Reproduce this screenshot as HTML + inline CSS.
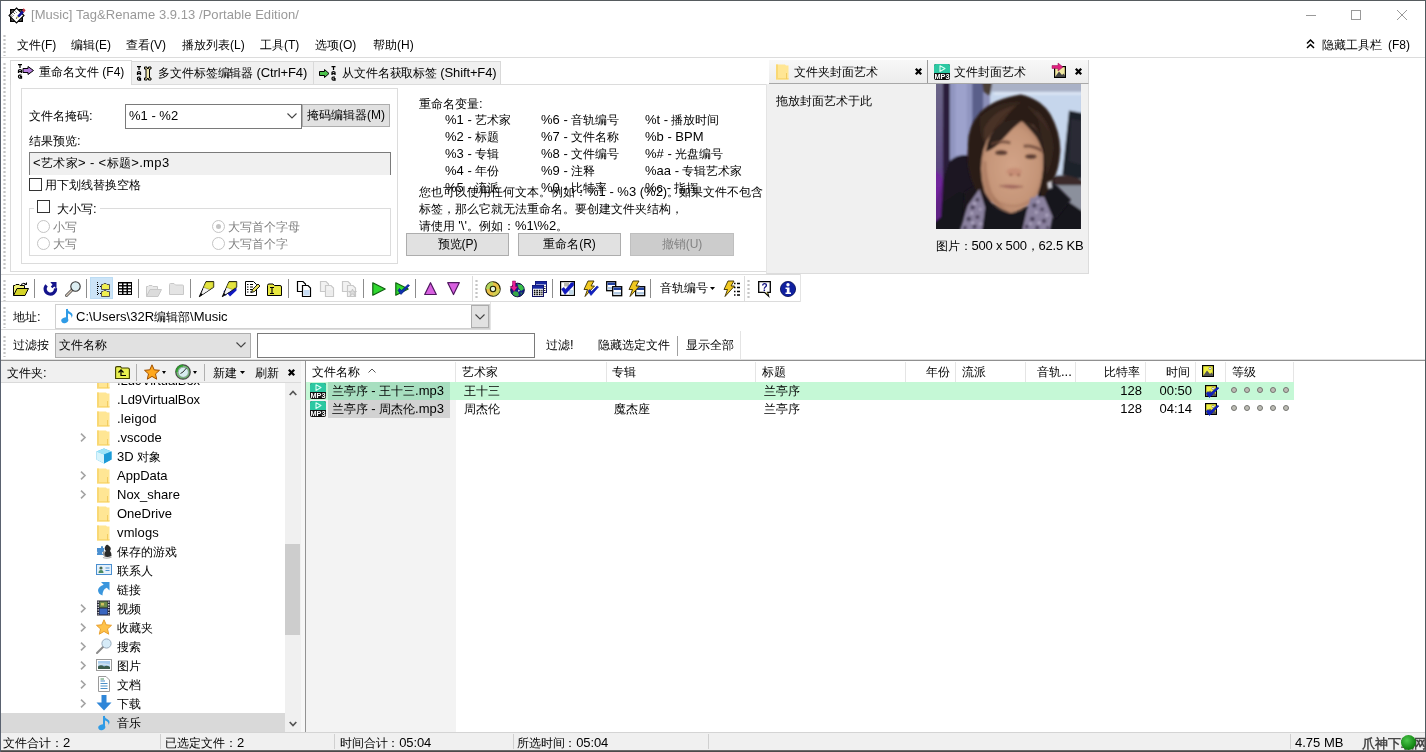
<!DOCTYPE html>
<html><head><meta charset="utf-8">
<style>
*{box-sizing:border-box;margin:0;padding:0}
html,body{width:1426px;height:752px;overflow:hidden;background:#fff}
body{font-family:"Liberation Sans",sans-serif;font-size:12px;color:#000;position:relative}
.a{position:absolute;white-space:nowrap}
.t{position:absolute;white-space:nowrap;line-height:16px;height:16px}
.r{position:absolute;white-space:nowrap;line-height:16px;height:16px;text-align:right}
.g{color:#808080}
.l{font-size:13px}
.sep{position:absolute;width:1px;background:#8c8c8c}
.hl{position:absolute;height:1px;background:#dcdcdc}
.btn{position:absolute;background:#e1e1e1;border:1px solid #adadad;text-align:center;line-height:20px;white-space:nowrap}
.cb{position:absolute;width:13px;height:13px;border:1px solid #333;background:#fff}
.rd{position:absolute;width:13px;height:13px;border:1px solid #c4c4c4;border-radius:50%;background:#fff}
.grip{position:absolute;width:3px;background-image:radial-gradient(circle,#c4c4c4 1px,transparent 1.3px);background-size:3px 4px}
svg{position:absolute;overflow:visible}
#root{position:absolute;left:0;top:0;width:1426px;height:752px;overflow:hidden;will-change:transform;transform:translateZ(0);opacity:.999}
</style></head><body>
<div id="root">
<div class="a" style="left:0px;top:0px;width:1px;height:752px;background:#5a6270"></div>
<div class="a" style="left:0px;top:0px;width:1426px;height:1px;background:#565b5e"></div>
<div class="a" style="left:1425px;top:0px;width:1px;height:752px;background:#4f5a5e"></div>
<svg style="left:8px;top:6px" width="18" height="18" viewBox="0 0 18 18" ><rect x="2.8" y="3.8" width="11.4" height="11.4" fill="#c8c8c8" stroke="#000" stroke-width="1.6"/>
<path d="M8.5 2L16 9.5L8.5 17L1 9.5Z" fill="#fff" stroke="#000" stroke-width="1.1"/>
<path d="M3.5 7.5L6 10M5 6L7.5 8.5M2.5 9L4.5 11M6.500 4.500L8.500 6.500" stroke="#000" stroke-width=".9" stroke-dasharray="1 .8"/>
<path d="M8.5 12L9.800 9.300L14 4.500L16 6.500L11.500 11Z" fill="#10109a"/>
<path d="M7.800 12.800L9.200 9.800L11 11.400Z" fill="#d8d880"/><path d="M7.800 12.800L8.400 11.500L9.200 12.200Z" fill="#000"/>
<path d="M14 4.500L15.600 2.300L17.600 4.300L16 6.500Z" fill="#c03040"/></svg>
<div class="t" style="left:31px;top:7px;font-size:13px;color:#999;letter-spacing:.05px">[Music] Tag&amp;Rename 3.9.13 /Portable Edition/</div>
<svg style="left:1300px;top:5px" width="120" height="20"><g stroke="#999" stroke-width="1" fill="none"><path d="M6 10.5H16"/><rect x="51.5" y="5.500" width="9" height="9"/><path d="M97 5L107 15M107 5L97 15"/></g></svg>
<div class="grip" style="left:3px;top:34px;height:22px"></div>
<div class="t" style="left:17px;top:37px;">文件(F)</div>
<div class="t" style="left:71px;top:37px;">编辑(E)</div>
<div class="t" style="left:126px;top:37px;">查看(V)</div>
<div class="t" style="left:182px;top:37px;">播放列表(L)</div>
<div class="t" style="left:260px;top:37px;">工具(T)</div>
<div class="t" style="left:315px;top:37px;">选项(O)</div>
<div class="t" style="left:373px;top:37px;">帮助(H)</div>
<svg style="left:1306px;top:39px" width="9" height="10"><path d="M1 4.500L4.500 1L8 4.500M1 9L4.500 5.500L8 9" stroke="#000" stroke-width="1.500" fill="none"/></svg>
<div class="t" style="left:1322px;top:37px;">隐藏工具栏</div>
<div class="t" style="left:1388px;top:37px;">(F8)</div>
<div class="hl" style="left:1px;top:57px;width:1424px"></div>
<div class="grip" style="left:3px;top:62px;height:208px"></div>
<div class="a" style="left:10px;top:84px;width:1079px;height:188px;border:1px solid #dcdcdc;background:#fff"></div>
<div class="a" style="left:131px;top:61px;width:183px;height:23px;background:#f0f0f0;border:1px solid #d9d9d9;border-bottom:none"></div>
<div class="a" style="left:313px;top:61px;width:188px;height:23px;background:#f0f0f0;border:1px solid #d9d9d9;border-bottom:none"></div>
<div class="a" style="left:10px;top:60px;width:122px;height:25px;background:#fff;border:1px solid #d9d9d9;border-bottom:none"></div>
<svg style="left:18px;top:64px" width="16" height="15" viewBox="0 0 16 15" ><g stroke="#000" stroke-width="1.250" fill="none">
<path d="M0 0.5H4M2 0V4"/>
<path d="M0.5 9V6.5Q0.5 5.5 2 5.5Q3.5 5.5 3.5 6.5V9M0.5 7.5H3.5"/>
<path d="M3.5 11H1.5Q0.5 11 0.5 12.5Q0.5 14 1.5 14H3.5V12.5H2"/></g><path d="M5 4.5H10V2.500L15.500 6.500L10 10.500V8.500H5Z" fill="#b57edc" stroke="#000" stroke-width="1"/></svg>
<svg style="left:137px;top:66px" width="16" height="15" viewBox="0 0 16 15" ><g stroke="#000" stroke-width="1.250" fill="none">
<path d="M0 0.5H4M2 0V4"/>
<path d="M0.5 9V6.5Q0.5 5.5 2 5.5Q3.5 5.5 3.5 6.5V9M0.5 7.5H3.5"/>
<path d="M3.5 11H1.5Q0.5 11 0.5 12.5Q0.5 14 1.5 14H3.5V12.5H2"/></g><path d="M7.5 1H10V2.5H11.5V1H14V3H12.5V12H14V14H11.5V12.5H10V14H7.5V12H9V3H7.5Z" fill="#f0e8b0" stroke="#000" stroke-width="1"/></svg>
<svg style="left:319px;top:66px" width="16" height="15" viewBox="0 0 16 15" ><path d="M0.5 5.5H5.5V3.5L10 7.5L5.5 11.5V9.5H0.5Z" fill="#4cc24c" stroke="#000" stroke-width="1"/><g stroke="#000" stroke-width="1.250" fill="none">
<path d="M12.5 0.5H16.5M14.5 0V4"/>
<path d="M13.0 9V6.5Q13.0 5.5 14.5 5.5Q16.0 5.5 16.0 6.5V9M13.0 7.5H16.0"/>
<path d="M16.0 11H14.0Q13.0 11 13.0 12.5Q13.0 14 14.0 14H16.0V12.5H14.5"/></g></svg>
<div class="t" style="left:39px;top:64px;">重命名文件 (F4)</div>
<div class="t" style="left:158px;top:65px;letter-spacing:-0.1px;">多文件标签编辑器 <span class="l">(Ctrl+F4)</span></div>
<div class="t" style="left:342px;top:65px;letter-spacing:-0.12px;">从文件名获取标签 <span class="l">(Shift+F4)</span></div>
<div class="a" style="left:21px;top:88px;width:377px;height:176px;border:1px solid #dcdcdc"></div>
<div class="t" style="left:29px;top:108px;">文件名掩码<span class="l">:</span></div>
<div class="a" style="left:125px;top:104px;width:177px;height:25px;border:1px solid #7a7a7a;background:#fff"></div>
<div class="t" style="left:129px;top:108px;"><span class="l">%1 - %2</span></div>
<svg style="left:287px;top:113px" width="10" height="6" viewBox="0 0 10 6" ><path d="M0.5 0.5L5 5L9.5 0.5" stroke="#444" fill="none" stroke-width="1.1"/></svg>
<div class="btn" style="left:302px;top:104px;width:88px;height:23px">掩码编辑器(M)</div>
<div class="t" style="left:29px;top:133px;">结果预览<span class="l">:</span></div>
<div class="a" style="left:29px;top:152px;width:362px;height:23px;background:#f0f0f0;border:1px solid #7a7a7a;border-bottom:none"></div>
<div class="t" style="left:33px;top:155px;letter-spacing:0.35px;"><span class="l">&lt;</span>艺术家<span class="l">&gt; - &lt;</span>标题<span class="l">&gt;.mp3</span></div>
<div class="cb" style="left:29px;top:178px"></div>
<div class="t" style="left:45px;top:177px;">用下划线替换空格</div>
<div class="a" style="left:29px;top:208px;width:362px;height:48px;border:1px solid #dcdcdc"></div>
<div class="a" style="left:34px;top:199px;width:66px;height:16px;background:#fff"></div>
<div class="cb" style="left:37px;top:200px"></div>
<div class="t" style="left:57px;top:201px;">大小写<span class="l">:</span></div>
<div class="rd" style="left:37px;top:220px"></div>
<div class="t g" style="left:53px;top:219px;">小写</div>
<div class="rd" style="left:37px;top:237px"></div>
<div class="t g" style="left:53px;top:236px;">大写</div>
<div class="rd" style="left:212px;top:220px"></div>
<div class="a" style="left:216px;top:224px;width:5px;height:5px;border-radius:50%;background:#c4c4c4"></div>
<div class="t g" style="left:228px;top:219px;">大写首个字母</div>
<div class="rd" style="left:212px;top:237px"></div>
<div class="t g" style="left:228px;top:236px;">大写首个字</div>
<div class="t" style="left:419px;top:96px;">重命名变量<span class="l">:</span></div>
<div class="t" style="left:445px;top:112px;"><span class="l">%1 -</span> 艺术家</div>
<div class="t" style="left:541px;top:112px;"><span class="l">%6 -</span> 音轨编号</div>
<div class="t" style="left:645px;top:112px;"><span class="l">%t -</span> 播放时间</div>
<div class="t" style="left:445px;top:129px;"><span class="l">%2 -</span> 标题</div>
<div class="t" style="left:541px;top:129px;"><span class="l">%7 -</span> 文件名称</div>
<div class="t" style="left:645px;top:129px;"><span class="l">%b - BPM</span></div>
<div class="t" style="left:445px;top:146px;"><span class="l">%3 -</span> 专辑</div>
<div class="t" style="left:541px;top:146px;"><span class="l">%8 -</span> 文件编号</div>
<div class="t" style="left:645px;top:146px;"><span class="l">%# -</span> 光盘编号</div>
<div class="t" style="left:445px;top:163px;"><span class="l">%4 -</span> 年份</div>
<div class="t" style="left:541px;top:163px;"><span class="l">%9 -</span> 注释</div>
<div class="t" style="left:645px;top:163px;"><span class="l">%aa -</span> 专辑艺术家</div>
<div class="t" style="left:445px;top:180px;"><span class="l">%5 -</span> 流派</div>
<div class="t" style="left:541px;top:180px;"><span class="l">%0 -</span> 比特率</div>
<div class="t" style="left:645px;top:180px;"><span class="l">%c -</span> 指挥</div>
<div class="t" style="left:419px;top:184px;">您也可以使用任何文本。例如：<span class="l">%1 - %3 (%2)</span>。如果文件不包含</div>
<div class="t" style="left:419px;top:201px;">标签，那么它就无法重命名。要创建文件夹结构，</div>
<div class="t" style="left:419px;top:218px;">请使用 <span class="l">'\'</span>。例如：<span class="l">%1\%2</span>。</div>
<div class="btn" style="left:406px;top:233px;width:103px;height:23px">预览(P)</div>
<div class="btn" style="left:518px;top:233px;width:103px;height:23px">重命名(R)</div>
<div class="btn" style="left:630px;top:233px;width:104px;height:23px;background:#ccc;border-color:#bfbfbf;color:#838383">撤销(U)</div>
<div class="a" style="left:766px;top:84px;width:323px;height:190px;background:#f0f0f0;border:1px solid #dcdcdc;border-top:none;border-left:1px solid #e4e4e4"></div>
<div class="a" style="left:766px;top:58px;width:4px;height:26px;background:#fff"></div>
<div class="a" style="left:769px;top:60px;width:320px;height:24px;background:linear-gradient(#f8f8f8,#ececec);border-bottom:1px solid #a8a8a8;border-right:1px solid #d0d0d0"></div>
<div class="a" style="left:927px;top:60px;width:1px;height:23px;background:#9a9a9a"></div>
<svg style="left:776px;top:64px" width="13" height="16" viewBox="0 0 13 16" ><path d="M0 0.5H9L10 1.5H12.5V15.5H0Z" fill="#ffe694"/><path d="M0 0.5H2V15.5H0ZM0 14H12.5V15.5H0Z" fill="#f9d874"/><path d="M10.5 9V15" stroke="#f2cc60" stroke-width="1"/></svg>
<div class="t" style="left:794px;top:64px;">文件夹封面艺术</div>
<svg style="left:915px;top:68px" width="7" height="7" viewBox="0 0 7 7" ><path d="M0.8 0.8L6.2 6.2M6.2 0.8L0.8 6.2" stroke="#000" stroke-width="2.3"/></svg>
<svg style="left:934px;top:64px" width="16" height="16" viewBox="0 0 16 16" ><rect x="0" y="0" width="16" height="16" rx="2" fill="#111"/><path d="M0 9V2Q0 0 2 0H14Q16 0 16 2V9Z" fill="#2cc8a2"/><path d="M6 1.8V7.4L11 4.6Z" fill="none" stroke="#d8fff4" stroke-width="1.1" stroke-linejoin="round"/><text x="8" y="15.300" font-family="Liberation Sans" font-weight="bold" font-size="7.6" text-anchor="middle" fill="#fff" textLength="15" lengthAdjust="spacingAndGlyphs">MP3</text></svg>
<div class="t" style="left:954px;top:64px;">文件封面艺术</div>
<svg style="left:1052px;top:63px" width="14" height="15" viewBox="0 0 14 15" ><rect x="2.6" y="3.6" width="10.8" height="10.8" fill="#f0e8a0" stroke="#000" stroke-width="1.2"/><path d="M3 14L7 8.5L10 12L11.5 10.5L13 12.5V14Z" fill="#444"/><path d="M0 2.5H6V0L11 4L6 8V5.5H0Z" fill="#e02080" stroke="#901050" stroke-width=".5"/></svg>
<svg style="left:1075px;top:68px" width="7" height="7" viewBox="0 0 7 7" ><path d="M0.8 0.8L6.2 6.2M6.2 0.8L0.8 6.2" stroke="#000" stroke-width="2.3"/></svg>
<div class="t" style="left:776px;top:93px;">拖放封面艺术于此</div>
<div class="t" style="left:936px;top:238px;letter-spacing:-0.2px;">图片：<span class="l">500 x 500</span>，<span class="l">62.5 KB</span></div>
<svg style="left:936px;top:84px" width="145" height="145" viewBox="0 0 752 752" preserveAspectRatio="none">
<defs><filter id="b1" x="-5%" y="-5%" width="110%" height="110%"><feGaussianBlur stdDeviation="5"/></filter>
<filter id="b2" x="-10%" y="-10%" width="120%" height="120%"><feGaussianBlur stdDeviation="9"/></filter>
<clipPath id="pc"><rect x="0" y="0" width="752" height="752"/></clipPath>
<linearGradient id="lg1" x1="0" y1="0" x2="0" y2="1"><stop offset="0" stop-color="#6c6788"/><stop offset=".55" stop-color="#5c4a80"/><stop offset=".75" stop-color="#6a1c92"/><stop offset="1" stop-color="#4a0c6a"/></linearGradient>
<radialGradient id="fg" cx=".5" cy=".5" r=".6"><stop offset="0" stop-color="#d3a488"/><stop offset=".7" stop-color="#c59578"/><stop offset="1" stop-color="#a67860"/></radialGradient>
</defs>
<g clip-path="url(#pc)">
<rect width="752" height="752" fill="#8c8fb8"/>
<g filter="url(#b1)">
<rect x="280" y="-10" width="480" height="520" fill="#c6d6ec"/>
<rect x="280" y="-10" width="480" height="50" fill="#a9b1c6"/>
<rect x="300" y="42" width="460" height="14" fill="#dbe6f4"/>
<rect x="-10" y="-10" width="50" height="780" fill="url(#lg1)"/>
<rect x="36" y="-10" width="36" height="780" fill="#2a1f3a"/>
<rect x="72" y="-10" width="120" height="420" fill="#9095c0"/>
<rect x="100" y="-10" width="60" height="380" fill="#9da2cc"/>
<rect x="188" y="-10" width="56" height="300" fill="#5a5e8a"/>
<path d="M240 -10H292L280 62L246 40Z" fill="#4a3c34"/>
<path d="M690 138L760 150V505L655 470Z" fill="#1f2029"/>
<path d="M700 180L752 190V420L690 400Z" fill="#2a2b34"/>
<path d="M590 490H760V680L620 600Z" fill="#8b909c"/>
<path d="M600 480Q680 460 760 500V525H600Z" fill="#3a2c2c"/>
<path d="M70 400Q130 350 200 380L260 560L200 770H-10V640Z" fill="#1b1521"/>
<path d="M0 640L120 560L300 620L520 640L570 530L760 660V770H-10Z" fill="#17131c"/>
<path d="M-10 450Q25 450 36 520L26 690L-10 720Z" fill="#7424a0" opacity=".8"/>
</g>
<g filter="url(#b1)">
<path d="M150 560L250 500L300 660L140 700Z" fill="#1a141f"/><path d="M520 520L600 500L700 600L620 700L540 640Z" fill="#19141d"/>
<!-- hair -->
<path d="M166 330Q160 225 228 148Q300 76 440 55Q545 78 595 160Q645 250 645 345Q640 445 605 505Q585 550 550 600L520 470L250 480L245 610Q150 480 166 330Z" fill="#2b1e19"/>
<path d="M230 170Q330 80 450 95Q400 110 340 170Q280 240 260 330Q220 260 230 170Z" fill="#36261f"/>
<path d="M520 130Q600 200 610 330Q600 420 575 470Q560 330 520 130Z" fill="#35251f"/>
<path d="M250 230Q300 130 420 110Q360 160 330 230Q300 300 285 350Q240 300 250 230Z" fill="#5a3c2e" opacity=".55"/>
<path d="M470 110Q560 150 590 260Q560 200 520 170Q495 140 470 110Z" fill="#4c3327" opacity=".5"/>
<!-- face -->
<path d="M246 340Q270 250 350 205Q430 175 505 215Q552 260 556 380Q560 480 528 570Q470 655 390 670Q300 650 252 560Q218 450 246 340Z" fill="url(#fg)"/>
<path d="M246 400Q236 500 270 580Q320 650 390 670Q330 630 290 560Q262 480 262 400Z" fill="#a9795f" opacity=".7"/>
<path d="M330 210Q380 175 445 190Q395 230 350 282Q300 340 258 352Q270 255 330 210Z" fill="#2f201a"/>
<path d="M445 190Q520 200 556 300L556 370Q540 290 500 250Q470 215 445 190Z" fill="#2f201a"/>
<!-- shirt & scarf -->
<path d="M245 600Q330 672 400 672Q470 660 520 600L560 770H220Z" fill="#17121b"/>
<path d="M225 545L255 640L238 770H120L165 630Z" fill="#8a819e"/>
<path d="M490 590L560 585L605 690L590 770H445L470 660Z" fill="#8a819e"/>
</g>
<g filter="url(#b1)" opacity=".9">
<ellipse cx="338" cy="356" rx="32" ry="11" fill="#4a2e26"/>
<ellipse cx="492" cy="376" rx="30" ry="11" fill="#4a2e26"/>
<path d="M285 312Q330 290 385 305" stroke="#6a4638" stroke-width="13" fill="none"/>
<path d="M455 322Q500 315 550 345" stroke="#6a4638" stroke-width="13" fill="none"/>
<ellipse cx="405" cy="455" rx="40" ry="20" fill="#c68c74"/>
<ellipse cx="388" cy="470" rx="9" ry="5" fill="#8a5646"/><ellipse cx="428" cy="472" rx="9" ry="5" fill="#8a5646"/>
<path d="M335 528Q390 515 445 532Q390 552 335 528Z" fill="#a86c62"/>
<path d="M330 528Q390 538 450 532" stroke="#84504a" stroke-width="5" fill="none"/>
<path d="M300 600Q390 660 480 610" stroke="#a87860" stroke-width="10" fill="none" opacity=".6"/>
<path d="M575 510L600 500L605 540L580 545Z" fill="#d8d8e0"/>
</g>
<g fill="#2c2438" opacity=".7" filter="url(#b1)">
<circle cx="190" cy="640" r="10"/><circle cx="215" cy="600" r="9"/><circle cx="170" cy="700" r="11"/><circle cx="215" cy="690" r="9"/><circle cx="200" cy="740" r="10"/><circle cx="150" cy="745" r="9"/>
<circle cx="510" cy="630" r="10"/><circle cx="550" cy="650" r="9"/><circle cx="500" cy="700" r="11"/><circle cx="560" cy="710" r="10"/><circle cx="525" cy="745" r="10"/><circle cx="470" cy="740" r="9"/><circle cx="580" cy="745" r="8"/>
</g>
<g fill="#c8c0d8" opacity=".7" filter="url(#b1)"><circle cx="200" cy="620" r="8"/><circle cx="185" cy="670" r="8"/><circle cx="230" cy="650" r="7"/><circle cx="190" cy="720" r="8"/><circle cx="230" cy="725" r="7"/><circle cx="530" cy="610" r="8"/><circle cx="520" cy="665" r="8"/><circle cx="575" cy="680" r="8"/><circle cx="535" cy="720" r="8"/><circle cx="490" cy="725" r="7"/></g>
</g>
</svg>

<div class="a" style="left:1px;top:274px;width:800px;height:1px;background:#dcdcdc"></div>
<div class="a" style="left:1px;top:301px;width:800px;height:1px;background:#dcdcdc"></div>
<div class="a" style="left:800px;top:274px;width:1px;height:28px;background:#e4e4e4"></div>
<div class="grip" style="left:3px;top:279px;height:22px"></div>
<div class="a" style="left:90px;top:277px;width:23px;height:22px;background:#cce4f7;border:1px solid #bcdcf4"></div>
<div class="sep" style="left:34px;top:279px;height:19px"></div>
<div class="sep" style="left:86px;top:279px;height:19px"></div>
<div class="sep" style="left:138px;top:279px;height:19px"></div>
<div class="sep" style="left:190px;top:279px;height:19px"></div>
<div class="sep" style="left:288px;top:279px;height:19px"></div>
<div class="sep" style="left:363px;top:279px;height:19px"></div>
<div class="sep" style="left:415px;top:279px;height:19px"></div>
<div class="sep" style="left:552px;top:279px;height:19px"></div>
<div class="sep" style="left:650px;top:279px;height:19px"></div>
<div class="a" style="left:472px;top:276px;width:1px;height:25px;background:#dcdcdc"></div>
<div class="grip" style="left:475px;top:279px;height:20px"></div>
<div class="a" style="left:744px;top:276px;width:1px;height:25px;background:#dcdcdc"></div>
<div class="grip" style="left:747px;top:279px;height:20px"></div>
<svg style="left:13px;top:282px" width="16" height="14" viewBox="0 0 16 14" ><path d="M0.5 13.5V3.5H2L3 2.5H6L7 3.5H11.5V6.5" fill="#f2f27a" stroke="#000"/>
<path d="M0.5 13.5L4 6.5H15.5L12 13.5Z" fill="#d4d428" stroke="#000"/><path d="M8 2.5Q11 0 13.5 2.5M13.5 2.5V0.5M13.5 2.5H11.5" stroke="#000" fill="none" stroke-width="1"/></svg>
<svg style="left:43px;top:282px" width="15" height="15" viewBox="0 0 15 15" ><path d="M3.600 3.300A5.200 5.200 0 1 0 12.500 6.300" fill="none" stroke="#14148c" stroke-width="3.200"/><path d="M7.300 0H13.500V6.800L11.300 4.600L9.300 6.300L7.800 4.600L9.500 2.800Z" fill="#14148c"/></svg>
<svg style="left:65px;top:281px" width="16" height="16" viewBox="0 0 16 16" ><path d="M1.5 14.5L8 8" stroke="#555" stroke-width="3" stroke-linecap="round"/><path d="M1.5 14.5L8 8" stroke="#d8c8b8" stroke-width="1.2" stroke-linecap="round"/><circle cx="10.5" cy="5.5" r="4.7" fill="#dceef2" stroke="#333" stroke-width="1.1"/></svg>
<svg style="left:96px;top:282px" width="14" height="15" viewBox="0 0 14 15" ><path d="M1.5 0V14M2 4.5H5M2 11.5H5" stroke="#000" stroke-dasharray="1 1" fill="none"/>
<path d="M5.5 7.5V2.5H7L8 1.5H10L11 2.5H13.5V7.5Z" fill="#f0f050" stroke="#555"/>
<path d="M5.5 14.5V9.5H7L8 8.5H10L11 9.5H13.5V14.5Z" fill="#f0f050" stroke="#555"/></svg>
<svg style="left:118px;top:282px" width="14" height="13" viewBox="0 0 14 13" ><rect x="0" y="0" width="14" height="13" fill="#000"/><g fill="#fff"><rect x="1" y="1.5" width="3" height="1.6"/><rect x="5.5" y="1.5" width="3" height="1.6"/><rect x="10" y="1.5" width="3" height="1.6"/><rect x="1" y="4.5" width="3" height="1.6"/><rect x="5.5" y="4.5" width="3" height="1.6"/><rect x="10" y="4.5" width="3" height="1.6"/><rect x="1" y="7.5" width="3" height="1.6"/><rect x="5.5" y="7.5" width="3" height="1.6"/><rect x="10" y="7.5" width="3" height="1.6"/><rect x="1" y="10.3" width="3" height="1.6"/><rect x="5.5" y="10.3" width="3" height="1.6"/><rect x="10" y="10.3" width="3" height="1.6"/></g></svg>
<svg style="left:146px;top:283px" width="16" height="14" viewBox="0 0 16 14" ><path d="M0.5 13.5V3.5H2L3 2.5H6L7 3.5H11.5V6.5" fill="#e8e8e8" stroke="#c8c8c8"/>
<path d="M0.5 13.5L4 6.5H15.5L12 13.5Z" fill="#dcdcdc" stroke="#c8c8c8"/></svg>
<svg style="left:169px;top:282px" width="16" height="14" viewBox="0 0 16 14" ><path d="M0.5 12.5V2.5Q0.5 1.5 1.5 1.5H5L6.5 3H13.5Q14.5 3 14.5 4V12.5Z" fill="#e4e4e4" stroke="#c8c8c8"/></svg>
<svg style="left:199px;top:281px" width="16" height="16" viewBox="0 0 16 16" ><path d="M7 0.600H14.700V6.200L0.300 15.700Z" fill="#d8d8d8" stroke="#000" stroke-width="1" stroke-linejoin="round"/>
<path d="M7.200 1.100H14.200V6L10.500 8.400L4.700 6.300Z" fill="#e4e440"/>
<path d="M7.200 1.100H14.200V6L10.500 8.400L4.700 6.300Z" fill="none" stroke="#8a8a10" stroke-width=".5"/>
<path d="M4.500 7L10 9L3 13.500Z" fill="#f4f4f4"/><path d="M0.300 15.700L2 12L3.500 13.500Z" fill="#000"/></svg>
<svg style="left:222px;top:281px" width="16" height="16" viewBox="0 0 16 16" ><path d="M1.500 10.500L4 8L14.500 7V9.500L8 15.500L5.500 12.500L3.500 15Z" fill="#1018c0"/><path d="M7 0.600H14.700V6.200L0.300 15.700Z" fill="#d8d8d8" stroke="#000" stroke-width="1" stroke-linejoin="round"/>
<path d="M7.200 1.100H14.200V6L10.500 8.400L4.700 6.300Z" fill="#e4e440"/>
<path d="M7.200 1.100H14.200V6L10.500 8.400L4.700 6.300Z" fill="none" stroke="#8a8a10" stroke-width=".5"/>
<path d="M4.500 7L10 9L3 13.500Z" fill="#f4f4f4"/><path d="M0.300 15.700L2 12L3.500 13.500Z" fill="#000"/></svg>
<svg style="left:245px;top:281px" width="16" height="15" viewBox="0 0 16 15" ><path d="M0.5 0.5H8.5L11.5 3.5V14.5H0.5Z" fill="#fff" stroke="#000"/>
<path d="M2 3.5H3.5M5 3.5H8M2 6H3.5M5 6H8M2 8.5H3.5M5 8.5H8M2 11H3.5M5 11H7" stroke="#000"/>
<path d="M6.5 11.5L7.5 8.5L13 3L15 5L9.5 10.5Z" fill="#e8e060" stroke="#000" stroke-width=".9"/></svg>
<svg style="left:267px;top:283px" width="16" height="14" viewBox="0 0 16 14" ><path d="M0.5 12.5V2.5Q0.5 1 2 1H6L7.5 2.5H13Q14.5 2.5 14.5 4V12.5Z" fill="#e8e840" stroke="#000"/>
<path d="M3 4.5H7M5 4.5V10.5M3 10.5H7" stroke="#000" stroke-width="1.1"/></svg>
<svg style="left:297px;top:281px" width="15" height="16" viewBox="0 0 15 16" ><path d="M0.5 0.5H6L8.5 3V10.5H0.5Z" fill="#fff" stroke="#000" stroke-width="1.2"/>
<path d="M5.5 4.5H11L13.5 7V15.5H5.5Z" fill="#fff" stroke="#000" stroke-width="1.2"/><rect x="6.5" y="9" width="6" height="5.5" fill="#c8ddf5"/></svg>
<svg style="left:320px;top:281px" width="15" height="16" viewBox="0 0 15 16" ><path d="M0.5 0.5H6L8.5 3V10.5H0.5Z" fill="#f2f2f2" stroke="#c8c8c8" stroke-width="1.2"/>
<path d="M5.5 4.5H11L13.5 7V15.5H5.5Z" fill="#f2f2f2" stroke="#c8c8c8" stroke-width="1.2"/><rect x="6.5" y="9" width="6" height="5.5" fill="#ececec"/></svg>
<svg style="left:342px;top:281px" width="15" height="16" viewBox="0 0 15 16" ><path d="M0.5 0.5H6L8.5 3V10.5H0.5Z" fill="#f2f2f2" stroke="#c8c8c8" stroke-width="1.2"/>
<path d="M5.5 4.5H11L13.5 7V15.5H5.5Z" fill="#f2f2f2" stroke="#c8c8c8" stroke-width="1.2"/><rect x="6.5" y="9" width="6" height="5.5" fill="#ececec"/><path d="M10.5 8L11.5 10.5H14.5L12 12L13 15L10.5 13L8 15L9 12L6.5 10.5H9.5Z" fill="#dcdcdc" stroke="#c0c0c0" stroke-width=".8"/></svg>
<svg style="left:372px;top:282px" width="15" height="14" viewBox="0 0 15 14" ><path d="M0.8 0.8V13.2L13.2 7Z" fill="#30d830" stroke="#106010" stroke-width="1.2" stroke-linejoin="round"/></svg>
<svg style="left:395px;top:282px" width="15" height="14" viewBox="0 0 15 14" ><path d="M0.8 0.8V13.2L13.2 7Z" fill="#30d830" stroke="#106010" stroke-width="1.2" stroke-linejoin="round"/><path d="M3 8.5L6 12.5L14.5 3.5L13 2.5L6.5 8.5L4.5 6.5Z" fill="#1030b0" stroke="#001080" stroke-width=".6"/></svg>
<svg style="left:424px;top:282px" width="13" height="13" viewBox="0 0 13 13" ><path d="M0.7 12.5H12.3L6.5 0.7Z" fill="#d860e0" stroke="#501860" stroke-width="1.2" stroke-linejoin="round"/></svg>
<svg style="left:447px;top:282px" width="13" height="13" viewBox="0 0 13 13" ><path d="M0.7 0.7H12.3L6.5 12.5Z" fill="#d860e0" stroke="#501860" stroke-width="1.2" stroke-linejoin="round"/></svg>
<svg style="left:485px;top:281px" width="16" height="16" viewBox="0 0 16 16" ><circle cx="8" cy="8" r="7.200" fill="#e8c048" stroke="#1c1c00" stroke-width="1.100"/><path d="M8 .8A7.200 7.200 0 0 0 .8 8H8Z" fill="#a8d860" opacity=".8"/><path d="M8 15.200A7.200 7.200 0 0 0 15.200 8H8Z" fill="#c8d858" opacity=".6"/><circle cx="8" cy="8" r="2.700" fill="#e8f8e0" stroke="#202000" stroke-width="1.100"/></svg>
<svg style="left:509px;top:281px" width="16" height="16" viewBox="0 0 16 16" ><circle cx="8.500" cy="9" r="6.800" fill="#141c88" stroke="#060c38" stroke-width="1"/>
<path d="M8.500 3L13 4L15 8L12 10L9.500 7Z" fill="#38c048"/><path d="M5 10L9 11L10 14.500L7 15.500L3.500 13Z" fill="#38a848"/><path d="M11 11.500L13.500 11.500L12.500 14Z" fill="#308050"/><path d="M9 8.500L11 9.500L9.500 11Z" fill="#f0f0e0"/>
<path d="M3.500 0H6.500V5.500H8.800L5 10.500L1.200 5.500H3.500Z" fill="#e82098" stroke="#800048" stroke-width=".5"/></svg>
<svg style="left:532px;top:281px" width="16" height="16" viewBox="0 0 16 16" ><rect x="3.500" y="0.500" width="11" height="11" fill="#fff" stroke="#101060"/><rect x="3.500" y="0.500" width="11" height="3" fill="#1828a0"/><path d="M5 5.500H13.500M12 7.500H13.500M12 9.500H13.500" stroke="#222" stroke-dasharray="1.500 1"/>
<rect x="0.500" y="4.500" width="11" height="11" fill="#fff" stroke="#101060"/><rect x="0.500" y="4.500" width="11" height="3.200" fill="#1828a0"/>
<path d="M1.800 9.500H10.500M1.800 11.500H10.500M1.800 13.500H10.500" stroke="#000" stroke-width="1.300" stroke-dasharray="1.600 .900"/></svg>
<svg style="left:560px;top:281px" width="15" height="15" viewBox="0 0 15 15" ><rect x="0.600" y="0.600" width="13.800" height="13.800" fill="#fff" stroke="#000" stroke-width="1.200"/><rect x="4" y="1.500" width="5" height="4" fill="#b8b8b0"/><rect x="9" y="9" width="4.500" height="4.500" fill="#c0d8e8"/>
<path d="M1.500 8L5 13.500L13.500 4.500V1.500L11 2L5.500 8.500L4 6.500Z" fill="#1018c0" stroke="#0810a0" stroke-width=".6"/></svg>
<svg style="left:583px;top:281px" width="16" height="16" viewBox="0 0 16 16" ><path transform="translate(0,0)" d="M5 0H11L8 5H11.500L2 15.500L4.500 8.500H1Z" fill="#f0c820" stroke="#3a2c00" stroke-width=".9"/><path d="M5 10L8 14.5L15.5 6L14 5L8.5 10.5L7 8.5Z" fill="#1020c0" stroke="#0818a0" stroke-width=".6"/></svg>
<svg style="left:606px;top:281px" width="16" height="16" viewBox="0 0 16 16" ><rect x="0.7" y="0.7" width="9" height="9" fill="#fff" stroke="#000" stroke-width="1.3"/><rect x="1.5" y="1.5" width="7.5" height="2.5" fill="#2040a0"/><rect x="1.5" y="6" width="7.5" height="2.5" fill="#b0c8e0"/><rect x="6.7" y="5.7" width="9" height="9" fill="#fff" stroke="#000" stroke-width="1.3"/><rect x="7.5" y="6.5" width="7.5" height="2.5" fill="#2040a0"/><rect x="7.5" y="11" width="7.5" height="2.5" fill="#b0c8e0"/></svg>
<svg style="left:629px;top:281px" width="16" height="16" viewBox="0 0 16 16" ><rect x="6.7" y="5.7" width="9" height="9" fill="#fff" stroke="#000" stroke-width="1.3"/><rect x="7.5" y="6.5" width="7.5" height="2.5" fill="#2040a0"/><rect x="7.5" y="11" width="7.5" height="2.5" fill="#b0c8e0"/><path transform="translate(-1,0)" d="M5 0H11L8 5H11.500L2 15.500L4.500 8.500H1Z" fill="#f0c820" stroke="#3a2c00" stroke-width=".9"/></svg>
<div class="t" style="left:660px;top:280px;">音轨编号</div>
<svg style="left:710px;top:287px" width="5" height="3" viewBox="0 0 5 3" ><path d="M0 0H5L2.5 3Z" fill="#000"/></svg>
<svg style="left:724px;top:281px" width="16" height="16" viewBox="0 0 16 16" ><path transform="translate(-1,0)" d="M5 0H11L8 5H11.500L2 15.500L4.500 8.500H1Z" fill="#f0c820" stroke="#3a2c00" stroke-width=".9"/><path d="M10 2.5H11.5M13 2.5H16M10 6.5H11.5M13 6.5H16M10 10.5H11.5M13 10.5H16M10 14H11.5M13 14H16" stroke="#000" stroke-width="1.4"/></svg>
<svg style="left:758px;top:281px" width="13" height="16" viewBox="0 0 13 16" ><path d="M0.7 0.7H12.3V11.3H9.5L10.5 15L6.5 11.3H0.7Z" fill="#fff" stroke="#000" stroke-width="1.3"/><path d="M8 11.5L10 14L9.3 11.5Z" fill="#e8e060"/><text x="6.5" y="9.6" font-family="Liberation Sans" font-weight="bold" font-size="10" text-anchor="middle" fill="#101080">?</text></svg>
<svg style="left:780px;top:281px" width="16" height="16" viewBox="0 0 16 16" ><circle cx="8" cy="8" r="7.6" fill="#1020a0" stroke="#000850" stroke-width=".8"/><circle cx="8" cy="3.8" r="1.7" fill="#fff"/><path d="M5.5 6.5H9.5V11.5H11V13H5.5V11.5H6.8V8H5.5Z" fill="#fff"/></svg>
<div class="a" style="left:1px;top:329px;width:490px;height:1px;background:#dcdcdc"></div>
<div class="a" style="left:490px;top:302px;width:1px;height:28px;background:#e4e4e4"></div>
<div class="grip" style="left:3px;top:306px;height:22px"></div>
<div class="t" style="left:13px;top:309px;">地址<span class="l">:</span></div>
<div class="a" style="left:55px;top:304px;width:435px;height:25px;border:1px solid #d0d0d0;background:#fff"></div>
<svg style="left:61px;top:308px" width="13" height="16" viewBox="0 0 13 16" ><path d="M6 1V11.5" stroke="#2f9be6" stroke-width="2"/><path d="M6 0.5Q7 3.5 10.5 5Q12.5 7 10.5 10Q11 6.5 6.5 5.2Z" fill="#2f9be6"/><ellipse cx="3.8" cy="12.3" rx="3.6" ry="2.8" fill="#2f9be6" transform="rotate(-20 3.8 12.3)"/></svg>
<div class="t" style="left:76px;top:309px;"><span class="l">C:\Users\32R</span>编辑部<span class="l">\Music</span></div>
<div class="a" style="left:471px;top:305px;width:18px;height:23px;background:#e1e1e1;border:1px solid #adadad"></div>
<svg style="left:475px;top:314px" width="10" height="6" viewBox="0 0 10 6" ><path d="M0.5 0.5L5 5L9.5 0.5" stroke="#444" fill="none" stroke-width="1.1"/></svg>
<div class="grip" style="left:3px;top:335px;height:22px"></div>
<div class="t" style="left:13px;top:337px;">过滤按</div>
<div class="a" style="left:55px;top:333px;width:196px;height:25px;border:1px solid #adadad;background:#e1e1e1"></div>
<div class="t" style="left:59px;top:337px;">文件名称</div>
<svg style="left:236px;top:342px" width="10" height="6" viewBox="0 0 10 6" ><path d="M0.5 0.5L5 5L9.5 0.5" stroke="#444" fill="none" stroke-width="1.1"/></svg>
<div class="a" style="left:257px;top:333px;width:278px;height:25px;border:1px solid #7a7a7a;background:#fff"></div>
<div class="t" style="left:546px;top:337px;">过滤<span class="l">!</span></div>
<div class="t" style="left:598px;top:337px;">隐藏选定文件</div>
<div class="sep" style="left:677px;top:336px;height:20px;background:#a0a0a0"></div>
<div class="t" style="left:686px;top:337px;">显示全部</div>
<div class="a" style="left:740px;top:331px;width:1px;height:28px;background:#e4e4e4"></div>
<div class="a" style="left:1px;top:359px;width:1424px;height:1px;background:#e0e0e0"></div>
<div class="a" style="left:1px;top:360px;width:1424px;height:1px;background:#909090"></div>
<div class="a" style="left:1px;top:361px;width:300px;height:22px;background:#f0f0f0;border-bottom:1px solid #dadada"></div>
<div class="t" style="left:7px;top:365px;">文件夹<span class="l">:</span></div>
<svg style="left:115px;top:366px" width="15" height="13" viewBox="0 0 15 13" ><path d="M0.6 12.5V2Q0.6 0.6 2 0.6H5.5L6.5 2H13Q14.4 2 14.4 3.4V12.5Z" fill="#e8f050" stroke="#404000" stroke-width="1.1"/><path d="M3.5 6.5L6 3.8L8.5 6.5M6 4.2V9.5H11" stroke="#000" stroke-width="1.2" fill="none"/></svg>
<div class="sep" style="left:136px;top:364px;height:17px;background:#b0b0b0"></div>
<svg style="left:144px;top:364px" width="16" height="16" viewBox="0 0 16 16" ><path d="M8 0.8L10.2 5.8L15.5 6.3L11.5 9.9L12.7 15.2L8 12.4L3.3 15.2L4.5 9.9L0.5 6.3L5.8 5.8Z" fill="#ffa81e" stroke="#a05000" stroke-width="1" stroke-linejoin="round"/></svg>
<svg style="left:162px;top:371px" width="4" height="3" viewBox="0 0 4 3" ><path d="M0 0H4L2.0 3Z" fill="#000"/></svg>
<svg style="left:175px;top:364px" width="16" height="16" viewBox="0 0 16 16" ><circle cx="8" cy="8" r="7.2" fill="#6fbf6f" stroke="#4a4a4a" stroke-width="1.3"/><circle cx="8.3" cy="8.3" r="5" fill="#d8eef0" stroke="#889" stroke-width=".6"/><path d="M8 8L11.5 4M8 8L5.5 9.5" stroke="#333" stroke-width="1"/><path d="M1.5 8A6.5 6.5 0 0 1 8 1.5" stroke="#2e9a2e" stroke-width="2" fill="none"/></svg>
<svg style="left:193px;top:371px" width="4" height="3" viewBox="0 0 4 3" ><path d="M0 0H4L2.0 3Z" fill="#000"/></svg>
<div class="sep" style="left:204px;top:364px;height:17px;background:#b0b0b0"></div>
<div class="t" style="left:213px;top:365px;">新建</div>
<svg style="left:240px;top:371px" width="5" height="3" viewBox="0 0 5 3" ><path d="M0 0H5L2.5 3Z" fill="#000"/></svg>
<div class="t" style="left:255px;top:365px;">刷新</div>
<svg style="left:288px;top:369px" width="7" height="7" viewBox="0 0 7 7" ><path d="M0.8 0.8L6.2 6.2M6.2 0.8L0.8 6.2" stroke="#000" stroke-width="2.3"/></svg>
<div class="a" style="left:1px;top:383px;width:284px;height:349px;background:#fff;overflow:hidden">
<svg style="left:96px;top:-10px" width="13" height="16" viewBox="0 0 13 16" ><path d="M0 0.5H9L10 1.5H12.5V15.5H0Z" fill="#ffe694"/><path d="M0 0.5H2V15.5H0ZM0 14H12.5V15.5H0Z" fill="#f9d874"/><path d="M10.5 9V15" stroke="#f2cc60" stroke-width="1"/></svg>
<div class="t" style="left:116px;top:-10px;letter-spacing:-0.1px;"><span class="l">.Ld9VirtualBox</span></div>
<svg style="left:96px;top:9px" width="13" height="16" viewBox="0 0 13 16" ><path d="M0 0.5H9L10 1.5H12.5V15.5H0Z" fill="#ffe694"/><path d="M0 0.5H2V15.5H0ZM0 14H12.5V15.5H0Z" fill="#f9d874"/><path d="M10.5 9V15" stroke="#f2cc60" stroke-width="1"/></svg>
<div class="t" style="left:116px;top:9px;letter-spacing:-0.1px;"><span class="l">.Ld9VirtualBox</span></div>
<svg style="left:96px;top:28px" width="13" height="16" viewBox="0 0 13 16" ><path d="M0 0.5H9L10 1.5H12.5V15.5H0Z" fill="#ffe694"/><path d="M0 0.5H2V15.5H0ZM0 14H12.5V15.5H0Z" fill="#f9d874"/><path d="M10.5 9V15" stroke="#f2cc60" stroke-width="1"/></svg>
<div class="t" style="left:116px;top:28px;letter-spacing:0.2px;"><span class="l">.leigod</span></div>
<svg style="left:79px;top:50px" width="6" height="9" viewBox="0 0 6 9" ><path d="M1 0.7L5 4.5L1 8.3" stroke="#a4a4a4" stroke-width="1.600" fill="none"/></svg>
<svg style="left:96px;top:47px" width="13" height="16" viewBox="0 0 13 16" ><path d="M0 0.5H9L10 1.5H12.5V15.5H0Z" fill="#ffe694"/><path d="M0 0.5H2V15.5H0ZM0 14H12.5V15.5H0Z" fill="#f9d874"/><path d="M10.5 9V15" stroke="#f2cc60" stroke-width="1"/></svg>
<div class="t" style="left:116px;top:47px;"><span class="l">.vscode</span></div>
<svg style="left:95px;top:65px" width="16" height="16" viewBox="0 0 16 16" ><path d="M8 0.5L15.5 3.5V11.5L8 15.5L0.5 11.5V3.5Z" fill="#2fb4e8"/><path d="M8 0.5L15.5 3.5L8 6.5L0.5 3.5Z" fill="#9fe4f8"/><path d="M0.5 3.5L8 6.5V15.5L0.5 11.5Z" fill="#d8f4fc"/><path d="M8 6.5L15.5 3.5V11.5L8 15.5Z" fill="#1d9ad6"/></svg>
<div class="t" style="left:116px;top:66px;"><span class="l">3D</span> 对象</div>
<svg style="left:79px;top:88px" width="6" height="9" viewBox="0 0 6 9" ><path d="M1 0.7L5 4.5L1 8.3" stroke="#a4a4a4" stroke-width="1.600" fill="none"/></svg>
<svg style="left:96px;top:85px" width="13" height="16" viewBox="0 0 13 16" ><path d="M0 0.5H9L10 1.5H12.5V15.5H0Z" fill="#ffe694"/><path d="M0 0.5H2V15.5H0ZM0 14H12.5V15.5H0Z" fill="#f9d874"/><path d="M10.5 9V15" stroke="#f2cc60" stroke-width="1"/></svg>
<div class="t" style="left:116px;top:85px;"><span class="l">AppData</span></div>
<svg style="left:79px;top:107px" width="6" height="9" viewBox="0 0 6 9" ><path d="M1 0.7L5 4.5L1 8.3" stroke="#a4a4a4" stroke-width="1.600" fill="none"/></svg>
<svg style="left:96px;top:104px" width="13" height="16" viewBox="0 0 13 16" ><path d="M0 0.5H9L10 1.5H12.5V15.5H0Z" fill="#ffe694"/><path d="M0 0.5H2V15.5H0ZM0 14H12.5V15.5H0Z" fill="#f9d874"/><path d="M10.5 9V15" stroke="#f2cc60" stroke-width="1"/></svg>
<div class="t" style="left:116px;top:104px;"><span class="l">Nox_share</span></div>
<svg style="left:96px;top:123px" width="13" height="16" viewBox="0 0 13 16" ><path d="M0 0.5H9L10 1.5H12.5V15.5H0Z" fill="#ffe694"/><path d="M0 0.5H2V15.5H0ZM0 14H12.5V15.5H0Z" fill="#f9d874"/><path d="M10.5 9V15" stroke="#f2cc60" stroke-width="1"/></svg>
<div class="t" style="left:116px;top:123px;"><span class="l">OneDrive</span></div>
<svg style="left:96px;top:142px" width="13" height="16" viewBox="0 0 13 16" ><path d="M0 0.5H9L10 1.5H12.5V15.5H0Z" fill="#ffe694"/><path d="M0 0.5H2V15.5H0ZM0 14H12.5V15.5H0Z" fill="#f9d874"/><path d="M10.5 9V15" stroke="#f2cc60" stroke-width="1"/></svg>
<div class="t" style="left:116px;top:142px;letter-spacing:0.13px;"><span class="l">vmlogs</span></div>
<svg style="left:95px;top:160px" width="16" height="16" viewBox="0 0 16 16" ><path d="M1 5H5V3.5Q6 2.5 7 3.5V5H8V9H6.5Q5.5 10 6.5 11H8V12H1V10.5Q2.2 10 1 8.5Z" fill="#4a8fd0"/><path d="M8 13Q8 9 10 8Q7.5 6 9.5 3Q11 0.5 13 3Q16 5 14 8Q16 10 15.5 13Q11 15 8 13Z" fill="#2a2a2a"/><path d="M7 14.5Q11 16 15.5 14" stroke="#b0b0b0" stroke-width="1.3" fill="none"/><path d="M8 8Q7 12 9 13" stroke="#909090" stroke-width="1.5" fill="none"/></svg>
<div class="t" style="left:116px;top:161px;">保存的游戏</div>
<svg style="left:95px;top:179px" width="16" height="16" viewBox="0 0 16 16" ><rect x="0.5" y="2.5" width="15" height="10" fill="#e4f0fb" stroke="#4a8fd0" stroke-width="1"/><circle cx="5" cy="6" r="1.6" fill="#4a6a50"/><path d="M2.5 11Q2.5 8 5 8Q7.500 8 7.500 11Z" fill="#4a8a60"/><path d="M9.5 6H13.5M9.5 8.500H13.5" stroke="#4a8fd0" stroke-width="1.100"/></svg>
<div class="t" style="left:116px;top:180px;">联系人</div>
<svg style="left:95px;top:198px" width="16" height="16" viewBox="0 0 16 16" ><path d="M5 1H13.500V9.500L10.800 6.800Q6.500 8.500 6.500 14.500Q2 13 2 9Q2.500 5.500 7.700 3.700Z" fill="#3a96dd"/></svg>
<div class="t" style="left:116px;top:199px;">链接</div>
<svg style="left:79px;top:221px" width="6" height="9" viewBox="0 0 6 9" ><path d="M1 0.7L5 4.5L1 8.3" stroke="#a4a4a4" stroke-width="1.600" fill="none"/></svg>
<svg style="left:95px;top:217px" width="16" height="16" viewBox="0 0 16 16" ><rect x="1" y="0.5" width="13" height="15" fill="#223"/><rect x="3.500" y="1.500" width="8" height="6" fill="#6b8a4a"/><rect x="3.500" y="8.500" width="8" height="6" fill="#3a66c0"/><path d="M2.200 1.500V15M12.800 1.500V15" stroke="#fff" stroke-width="1.200" stroke-dasharray="1.300 1.300"/><rect x="5" y="3" width="3" height="2.500" fill="#d0c060"/></svg>
<div class="t" style="left:116px;top:218px;">视频</div>
<svg style="left:79px;top:240px" width="6" height="9" viewBox="0 0 6 9" ><path d="M1 0.7L5 4.5L1 8.3" stroke="#a4a4a4" stroke-width="1.600" fill="none"/></svg>
<svg style="left:95px;top:236px" width="16" height="16" viewBox="0 0 16 16" ><path d="M8 0.8L10.2 5.8L15.5 6.3L11.5 9.9L12.7 15.2L8 12.4L3.3 15.2L4.5 9.9L0.5 6.3L5.8 5.8Z" fill="#ffc24a" stroke="#e8a030" stroke-width="1" stroke-linejoin="round"/></svg>
<div class="t" style="left:116px;top:237px;">收藏夹</div>
<svg style="left:79px;top:259px" width="6" height="9" viewBox="0 0 6 9" ><path d="M1 0.7L5 4.5L1 8.3" stroke="#a4a4a4" stroke-width="1.600" fill="none"/></svg>
<svg style="left:95px;top:255px" width="16" height="16" viewBox="0 0 16 16" ><path d="M1 15L7.500 8.500" stroke="#8a8a8a" stroke-width="2" stroke-linecap="round"/><circle cx="10.500" cy="5.500" r="4.600" fill="#d6ebf8" stroke="#9ab" stroke-width="1"/></svg>
<div class="t" style="left:116px;top:256px;">搜索</div>
<svg style="left:79px;top:278px" width="6" height="9" viewBox="0 0 6 9" ><path d="M1 0.7L5 4.5L1 8.3" stroke="#a4a4a4" stroke-width="1.600" fill="none"/></svg>
<svg style="left:95px;top:274px" width="16" height="16" viewBox="0 0 16 16" ><rect x="0.500" y="2.500" width="15" height="11" fill="#fff" stroke="#9a9a9a" stroke-width="1"/><rect x="2" y="4" width="12" height="8" fill="#a8cdee"/><path d="M2 12V9.500Q5 7 8 9.500Q11 8 14 10V12Z" fill="#3b5d4c"/><path d="M2 6.500Q6 5.500 14 7.500V9Q8 7 2 8.500Z" fill="#dbe8f0" opacity=".8"/></svg>
<div class="t" style="left:116px;top:275px;">图片</div>
<svg style="left:79px;top:297px" width="6" height="9" viewBox="0 0 6 9" ><path d="M1 0.7L5 4.5L1 8.3" stroke="#a4a4a4" stroke-width="1.600" fill="none"/></svg>
<svg style="left:95px;top:293px" width="16" height="16" viewBox="0 0 16 16" ><path d="M2.500 0.500H10L13.500 4V15.500H2.500Z" fill="#fff" stroke="#9a9a9a" stroke-width="1"/><path d="M4.500 5H9M4.500 7.500H11.500M4.500 10H11.500M4.500 12.500H11.500" stroke="#4a8fc8" stroke-width="1.100"/><path d="M4.500 3H8" stroke="#5a9a6a" stroke-width="1.100"/></svg>
<div class="t" style="left:116px;top:294px;">文档</div>
<svg style="left:79px;top:316px" width="6" height="9" viewBox="0 0 6 9" ><path d="M1 0.7L5 4.5L1 8.3" stroke="#a4a4a4" stroke-width="1.600" fill="none"/></svg>
<svg style="left:95px;top:312px" width="16" height="16" viewBox="0 0 16 16" ><path d="M5.500 0H10.500V7.500H15.500L8 15.500L0.500 7.500H5.500Z" fill="#2f86d8"/></svg>
<div class="t" style="left:116px;top:313px;">下载</div>
<div class="a" style="left:0;top:330px;width:284px;height:19px;background:#d9d9d9"></div>
<svg style="left:97px;top:332px" width="13" height="16" viewBox="0 0 13 16" ><path d="M6 1V11.5" stroke="#2f9be6" stroke-width="2"/><path d="M6 0.5Q7 3.5 10.5 5Q12.5 7 10.5 10Q11 6.5 6.5 5.2Z" fill="#2f9be6"/><ellipse cx="3.8" cy="12.3" rx="3.6" ry="2.8" fill="#2f9be6" transform="rotate(-20 3.8 12.3)"/></svg>
<div class="t" style="left:116px;top:332px;">音乐</div>
</div>
<div class="a" style="left:285px;top:383px;width:16px;height:349px;background:#f0f0f0"></div>
<div class="a" style="left:285px;top:544px;width:15px;height:91px;background:#cdcdcd"></div>
<svg style="left:289px;top:390px" width="8" height="6" viewBox="0 0 8 6" ><path d="M0.7 5L4 1.500L7.300 5" stroke="#555" stroke-width="1.700" fill="none"/></svg>
<svg style="left:289px;top:721px" width="8" height="6" viewBox="0 0 8 6" ><path d="M0.700 1L4 4.500L7.300 1" stroke="#555" stroke-width="1.700" fill="none"/></svg>
<div class="a" style="left:301px;top:361px;width:4px;height:372px;background:#f7f7f7"></div>
<div class="a" style="left:305px;top:361px;width:1px;height:372px;background:#939393"></div>
<div class="a" style="left:306px;top:382px;width:150px;height:351px;background:#f3f3f3"></div>
<div class="a" style="left:306px;top:382px;width:988px;height:18px;background:#c5f8d6"></div>
<div class="a" style="left:328px;top:382px;width:122px;height:18px;background:#a8dfc0"></div>
<div class="a" style="left:328px;top:400px;width:122px;height:18px;background:#d2d2d2"></div>
<div class="a" style="left:455px;top:362px;width:1px;height:20px;background:#e5e5e5"></div>
<div class="a" style="left:606px;top:362px;width:1px;height:20px;background:#e5e5e5"></div>
<div class="a" style="left:755px;top:362px;width:1px;height:20px;background:#e5e5e5"></div>
<div class="a" style="left:905px;top:362px;width:1px;height:20px;background:#e5e5e5"></div>
<div class="a" style="left:955px;top:362px;width:1px;height:20px;background:#e5e5e5"></div>
<div class="a" style="left:1025px;top:362px;width:1px;height:20px;background:#e5e5e5"></div>
<div class="a" style="left:1075px;top:362px;width:1px;height:20px;background:#e5e5e5"></div>
<div class="a" style="left:1145px;top:362px;width:1px;height:20px;background:#e5e5e5"></div>
<div class="a" style="left:1195px;top:362px;width:1px;height:20px;background:#e5e5e5"></div>
<div class="a" style="left:1225px;top:362px;width:1px;height:20px;background:#e5e5e5"></div>
<div class="a" style="left:1293px;top:362px;width:1px;height:20px;background:#e5e5e5"></div>
<div class="t" style="left:312px;top:364px;">文件名称</div>
<svg style="left:368px;top:368px" width="8" height="5" viewBox="0 0 8 5" ><path d="M0.500 4.500L4 1L7.500 4.500" stroke="#555" fill="none"/></svg>
<div class="t" style="left:462px;top:364px;">艺术家</div>
<div class="t" style="left:612px;top:364px;">专辑</div>
<div class="t" style="left:762px;top:364px;">标题</div>
<div class="t" style="left:926px;top:364px;">年份</div>
<div class="t" style="left:962px;top:364px;">流派</div>
<div class="t" style="left:1037px;top:364px;">音轨<span class="l">...</span></div>
<div class="t" style="left:1104px;top:364px;">比特率</div>
<div class="t" style="left:1166px;top:364px;">时间</div>
<svg style="left:1202px;top:365px" width="14" height="13" viewBox="0 0 14 13" ><rect x="0.6" y="0.6" width="10.8" height="10.8" fill="#f0f040" stroke="#000" stroke-width="1.2"/><circle cx="8" cy="3.5" r="1.2" fill="#fff" stroke="#555" stroke-width=".5"/><path d="M1 11L5 5.5L8 9L9.5 7.5L11 9.5V11Z" fill="#555"/></svg>
<div class="t" style="left:1232px;top:364px;">等级</div>
<svg style="left:310px;top:383px" width="16" height="16" viewBox="0 0 16 16" ><rect x="0" y="0" width="16" height="16" rx="2" fill="#111"/><path d="M0 9V2Q0 0 2 0H14Q16 0 16 2V9Z" fill="#2cc8a2"/><path d="M6 1.8V7.4L11 4.6Z" fill="none" stroke="#d8fff4" stroke-width="1.1" stroke-linejoin="round"/><text x="8" y="15.300" font-family="Liberation Sans" font-weight="bold" font-size="7.6" text-anchor="middle" fill="#fff" textLength="15" lengthAdjust="spacingAndGlyphs">MP3</text></svg>
<div class="t" style="left:332px;top:383px;">兰亭序 <span class="l">-</span> 王十三<span class="l">.mp3</span></div>
<div class="t" style="left:464px;top:383px;">王十三</div>
<div class="t" style="left:614px;top:383px;"></div>
<div class="t" style="left:764px;top:383px;">兰亭序</div>
<div class="r" style="left:1102px;top:383px;width:40px"><span class="l">128</span></div>
<div class="r" style="left:1152px;top:383px;width:40px"><span class="l">00:50</span></div>
<svg style="left:1205px;top:385px" width="14" height="13" viewBox="0 0 14 13" ><rect x="0.6" y="0.6" width="10.8" height="10.8" fill="#f0f040" stroke="#000" stroke-width="1.2"/><circle cx="8" cy="3.5" r="1.2" fill="#fff" stroke="#555" stroke-width=".5"/><path d="M1 11L5 5.5L8 9L9.5 7.5L11 9.5V11Z" fill="#555"/><path d="M1 8.5L4.5 12.5L14 3L12 2.5L5 8.5L3 6.5Z" fill="#1020c0" stroke="#0818a0" stroke-width=".6"/></svg>
<div class="a" style="left:1231px;top:387px;width:6px;height:6px;border-radius:50%;background:#bdbdb5;border:1px solid #747470"></div>
<div class="a" style="left:1244px;top:387px;width:6px;height:6px;border-radius:50%;background:#bdbdb5;border:1px solid #747470"></div>
<div class="a" style="left:1257px;top:387px;width:6px;height:6px;border-radius:50%;background:#bdbdb5;border:1px solid #747470"></div>
<div class="a" style="left:1270px;top:387px;width:6px;height:6px;border-radius:50%;background:#bdbdb5;border:1px solid #747470"></div>
<div class="a" style="left:1283px;top:387px;width:6px;height:6px;border-radius:50%;background:#bdbdb5;border:1px solid #747470"></div>
<svg style="left:310px;top:401px" width="16" height="16" viewBox="0 0 16 16" ><rect x="0" y="0" width="16" height="16" rx="2" fill="#111"/><path d="M0 9V2Q0 0 2 0H14Q16 0 16 2V9Z" fill="#2cc8a2"/><path d="M6 1.8V7.4L11 4.6Z" fill="none" stroke="#d8fff4" stroke-width="1.1" stroke-linejoin="round"/><text x="8" y="15.300" font-family="Liberation Sans" font-weight="bold" font-size="7.6" text-anchor="middle" fill="#fff" textLength="15" lengthAdjust="spacingAndGlyphs">MP3</text></svg>
<div class="t" style="left:332px;top:401px;">兰亭序 <span class="l">-</span> 周杰伦<span class="l">.mp3</span></div>
<div class="t" style="left:464px;top:401px;">周杰伦</div>
<div class="t" style="left:614px;top:401px;">魔杰座</div>
<div class="t" style="left:764px;top:401px;">兰亭序</div>
<div class="r" style="left:1102px;top:401px;width:40px"><span class="l">128</span></div>
<div class="r" style="left:1152px;top:401px;width:40px"><span class="l">04:14</span></div>
<svg style="left:1205px;top:403px" width="14" height="13" viewBox="0 0 14 13" ><rect x="0.6" y="0.6" width="10.8" height="10.8" fill="#f0f040" stroke="#000" stroke-width="1.2"/><circle cx="8" cy="3.5" r="1.2" fill="#fff" stroke="#555" stroke-width=".5"/><path d="M1 11L5 5.5L8 9L9.5 7.5L11 9.5V11Z" fill="#555"/><path d="M1 8.5L4.5 12.5L14 3L12 2.5L5 8.5L3 6.5Z" fill="#1020c0" stroke="#0818a0" stroke-width=".6"/></svg>
<div class="a" style="left:1231px;top:405px;width:6px;height:6px;border-radius:50%;background:#bdbdb5;border:1px solid #747470"></div>
<div class="a" style="left:1244px;top:405px;width:6px;height:6px;border-radius:50%;background:#bdbdb5;border:1px solid #747470"></div>
<div class="a" style="left:1257px;top:405px;width:6px;height:6px;border-radius:50%;background:#bdbdb5;border:1px solid #747470"></div>
<div class="a" style="left:1270px;top:405px;width:6px;height:6px;border-radius:50%;background:#bdbdb5;border:1px solid #747470"></div>
<div class="a" style="left:1283px;top:405px;width:6px;height:6px;border-radius:50%;background:#bdbdb5;border:1px solid #747470"></div>
<div class="a" style="left:1px;top:732px;width:1424px;height:18px;background:#f0f0f0;border-top:1px solid #d4d4d4"></div>
<div class="a" style="left:1px;top:750px;width:1424px;height:2px;background:linear-gradient(#7a7a7a,#3a3a3a)"></div>
<div class="a" style="left:160px;top:734px;width:1px;height:15px;background:#d0d0d0"></div>
<div class="a" style="left:334px;top:734px;width:1px;height:15px;background:#d0d0d0"></div>
<div class="a" style="left:513px;top:734px;width:1px;height:15px;background:#d0d0d0"></div>
<div class="a" style="left:708px;top:734px;width:1px;height:15px;background:#d0d0d0"></div>
<div class="a" style="left:1290px;top:734px;width:1px;height:15px;background:#d0d0d0"></div>
<div class="t" style="left:3px;top:735px;">文件合计：<span class="l">2</span></div>
<div class="t" style="left:165px;top:735px;">已选定文件：<span class="l">2</span></div>
<div class="t" style="left:340px;top:735px;letter-spacing:-0.15px;">时间合计：<span class="l">05:04</span></div>
<div class="t" style="left:517px;top:735px;letter-spacing:-0.15px;">所选时间：<span class="l">05:04</span></div>
<div class="t" style="left:1295px;top:735px;"><span class="l">4.75 MB</span></div>
<div class="t" style="left:1362px;top:736px;font-weight:bold;font-size:12.5px;color:#484848">爪神下载网</div>
<div class="a" style="left:1401px;top:735px;width:15px;height:15px;border-radius:50%;background:radial-gradient(circle at 40% 35%,#4cc84c,#168a16 60%,#0a5a0a)"></div>
</div>
</body></html>
